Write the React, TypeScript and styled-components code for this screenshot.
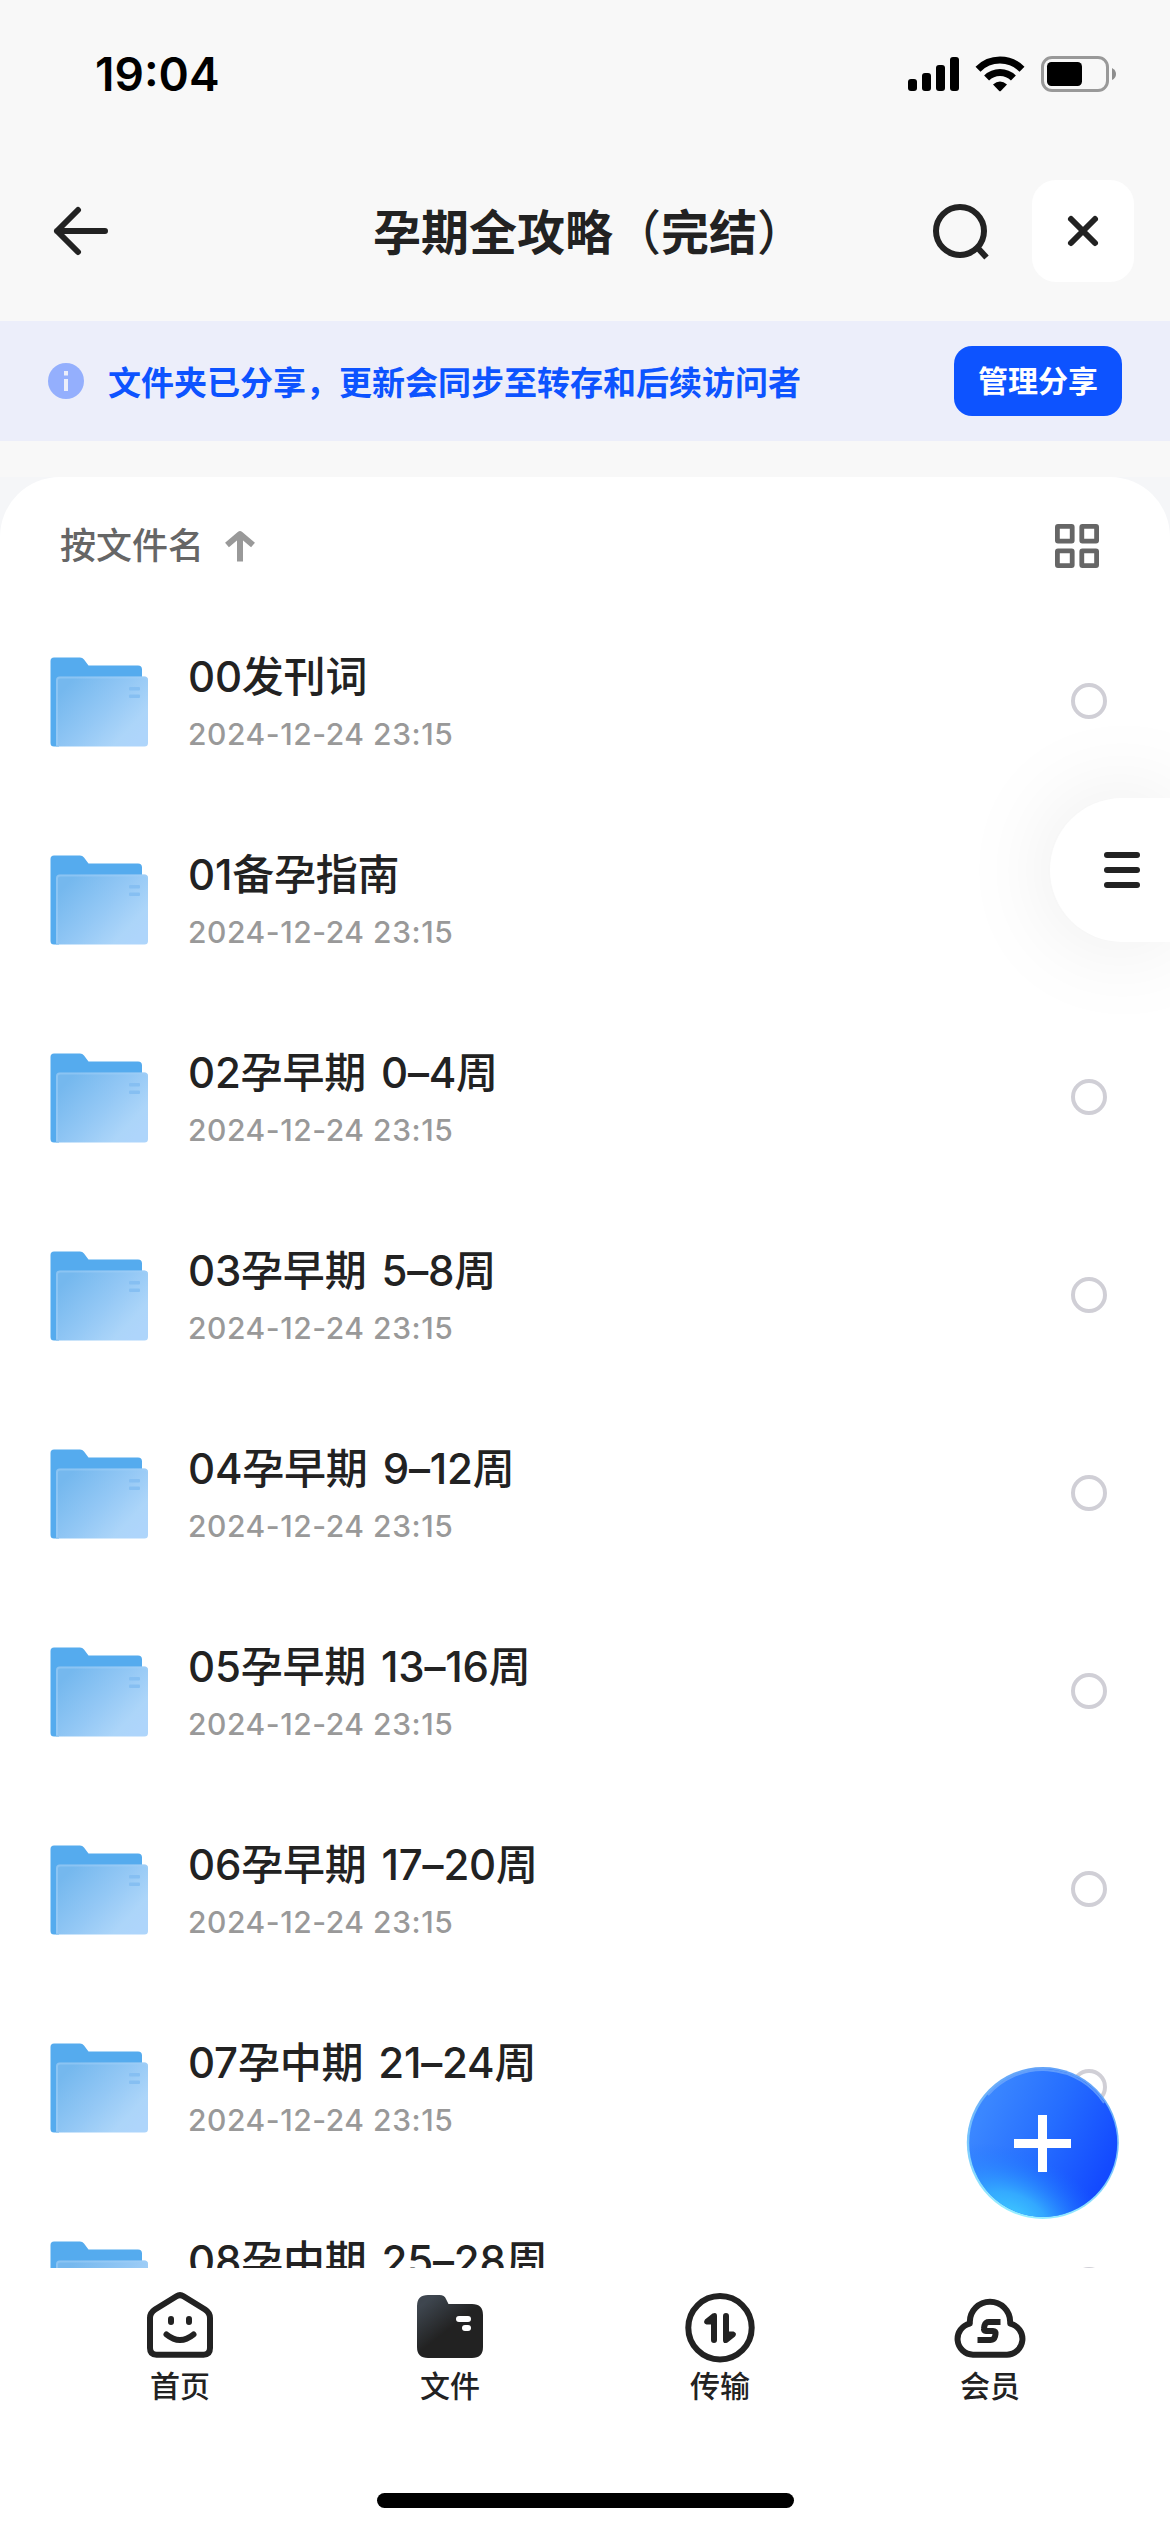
import React from "react";
import styled, { createGlobalStyle } from "styled-components";

const ink = "#222222";

const GlobalStyle = createGlobalStyle`
  * { box-sizing: border-box; }
  body {
    margin: 0;
    background: #ffffff;
    font-family: Inter, "Noto Sans CJK SC", sans-serif;
    color: ${ink};
  }
  button { font: inherit; border: 0; padding: 0; margin: 0; background: none; color: inherit; }
  svg { display: block; flex: none; }
`;

const Screen = styled.div`
  position: relative;
  width: 1170px;
  height: 2532px;
  display: flex;
  flex-direction: column;
  overflow: hidden;
  background: #f8f8f8;
`;

const StatusBar = styled.div`
  height: 141px;
  padding: 7px 54px 0 95px;
  display: flex;
  align-items: center;
  justify-content: space-between;
`;

const Clock = styled.span`
  font-size: 46px;
  font-weight: 600;
  line-height: 60px;
  color: #000;
`;

const StatusIcons = styled.div`
  display: flex;
  align-items: center;
  gap: 16px;
`;

const NavBar = styled.header`
  height: 180px;
  padding: 0 36px 0 48px;
  display: grid;
  grid-template-columns: 325px 1fr auto;
  align-items: center;
`;

const Title = styled.h1`
  margin: 3px 0 0;
  font-size: 48px;
  font-weight: 700;
  line-height: 72px;
  white-space: nowrap;
`;

const Paren = styled.span`
  font-weight: 500;
`;

const NavActions = styled.div`
  display: flex;
  align-items: center;
  gap: 39px;
`;

const IconButton = styled.button`
  display: flex;
  align-items: center;
  justify-content: center;
`;

const BackButton = styled(IconButton)`
  justify-self: start;
`;

const CloseButton = styled(IconButton)`
  width: 102px;
  height: 102px;
  border-radius: 24px;
  background: #ffffff;
`;

const ShareBanner = styled.div`
  height: 120px;
  padding: 0 48px;
  display: flex;
  align-items: center;
  background: #eceefa;
`;

const BannerText = styled.span`
  margin-left: 24px;
  padding-top: 4px;
  flex: 1;
  font-size: 33px;
  font-weight: 700;
  line-height: 48px;
  color: #0d53ff;
`;

const ManageButton = styled.button`
  width: 168px;
  height: 70px;
  border-radius: 18px;
  background: #0d53ff;
  color: #ffffff;
  font-size: 30px;
  font-weight: 700;
  line-height: 44px;
`;

const PanelBackdrop = styled.div`
  margin-top: 36px;
  flex: 1;
  min-height: 0;
  background: #f5f6f8;
`;

const Panel = styled.main`
  height: 100%;
  overflow: hidden;
  border-radius: 60px 60px 0 0;
  background: #ffffff;
`;

const SortBar = styled.div`
  height: 126px;
  padding: 12px 71px 0 60px;
  display: flex;
  align-items: center;
  justify-content: space-between;
`;

const SortButton = styled.button`
  display: flex;
  align-items: center;
  gap: 18px;
  font-size: 36px;
  font-weight: 500;
  line-height: 52px;
  color: #666666;
`;

const FileList = styled.ul`
  margin: 0;
  padding: 0;
  list-style: none;
`;

const FileRow = styled.li`
  height: 198px;
  padding: 0 63px 0 50px;
  display: flex;
  align-items: center;
`;

const FileText = styled.div`
  margin-left: 40px;
  padding-bottom: 3px;
  flex: 1;
  display: flex;
  flex-direction: column;
`;

const FileName = styled.span`
  font-size: 42px;
  font-weight: 450;
  line-height: 60px;
  letter-spacing: -0.2px;
  word-spacing: 4px;
  white-space: nowrap;
`;

const FileDate = styled.span`
  font-size: 30px;
  font-weight: 500;
  line-height: 40px;
  margin-top: 7px;
  letter-spacing: 0.55px;
  color: #999999;
`;

const SelectCircle = styled.span`
  width: 36px;
  height: 36px;
  margin-bottom: 2px;
  border: 4px solid #d0cfd6;
  border-radius: 50%;
`;

const TabBar = styled.nav`
  height: 264px;
  padding: 0 45px;
  display: grid;
  grid-template-columns: repeat(4, 270px);
  grid-template-rows: 225px 15px;
  background: #ffffff;
`;

const Tab = styled.button`
  padding-top: 21px;
  display: flex;
  flex-direction: column;
  align-items: center;
  justify-content: flex-start;
`;

const TabIconBox = styled.span`
  height: 72px;
  display: flex;
  align-items: flex-start;
`;

const TabLabel = styled.span`
  margin-top: 3px;
  font-size: 30px;
  font-weight: 500;
  line-height: 44px;
`;

const HomeIndicator = styled.div`
  grid-column: 1 / -1;
  justify-self: center;
  width: 417px;
  height: 15px;
  border-radius: 8px;
  background: #000;
`;

const SideMenu = styled.button`
  position: absolute;
  top: 798px;
  right: 0;
  width: 120px;
  height: 144px;
  padding-left: 54px;
  display: flex;
  flex-direction: column;
  justify-content: center;
  gap: 9px;
  border-radius: 72px 0 0 72px;
  background: #ffffff;
  box-shadow: 0 0 100px rgba(0, 0, 0, 0.09);
`;

const MenuLine = styled.span`
  width: 36px;
  height: 6px;
  border-radius: 3px;
  background: ${ink};
`;

const AddButton = styled.button`
  position: absolute;
  top: 2066px;
  left: 966px;
  width: 154px;
  height: 154px;
`;

const SignalIcon = () => (
  <svg width="51" height="34" viewBox="0 0 51 34">
    <rect x="0" y="22" width="9" height="12" rx="3" />
    <rect x="14" y="16" width="9" height="18" rx="3" />
    <rect x="28" y="8" width="9" height="26" rx="3" />
    <rect x="42" y="0" width="9" height="34" rx="3" />
  </svg>
);

const WifiIcon = () => (
  <svg width="50" height="36" viewBox="0 0 50 36">
    <g fill="none" stroke="#000" strokeWidth="7">
      <path d="M3 13.2 A31 31 0 0 1 47 13.2" />
      <path d="M11.6 22 A19 19 0 0 1 38.4 22" />
    </g>
    <path d="M18 28.5 Q25 22.5 32 28.5 L26 34.8 Q25 35.8 24 34.8 Z" />
  </svg>
);

const BatteryIcon = () => (
  <svg width="75" height="36" viewBox="0 0 75 36">
    <rect x="1.5" y="1.5" width="65" height="33" rx="9.5" fill="none" stroke="#999" strokeWidth="3" />
    <rect x="6" y="6" width="35" height="24" rx="4.5" />
    <path d="M71 12 Q75 14 75 18 Q75 22 71 24 Z" fill="#8e8e8e" />
  </svg>
);

const BackIcon = () => (
  <svg width="66" height="60" viewBox="0 0 66 60" fill="none" stroke={ink} strokeWidth="6" strokeLinecap="round" strokeLinejoin="round">
    <path d="M9 30 H57 M30 9 L9 30 L30 51" />
  </svg>
);

const SearchIcon = () => (
  <svg width="66" height="66" viewBox="0 0 66 66" fill="none" stroke={ink} strokeWidth="6">
    <circle cx="33" cy="33" r="24" />
    <path d="M49 48 L59.5 59.5" />
  </svg>
);

const CloseIcon = () => (
  <svg width="36" height="36" viewBox="0 0 36 36" fill="none" stroke={ink} strokeWidth="6" strokeLinecap="round">
    <path d="M6 6 L30 30 M30 6 L6 30" />
  </svg>
);

const InfoIcon = () => (
  <svg width="36" height="36" viewBox="0 0 36 36">
    <circle cx="18" cy="18" r="18" fill="#94affd" />
    <path d="M16 8 H20 V12.5 H16 Z M16 16 H20 V28 H16 Z" fill="#eceefa" />
  </svg>
);

const SortArrowIcon = () => (
  <svg width="36" height="36" viewBox="0 0 36 36" fill="none" stroke="#999" strokeWidth="6" strokeLinejoin="round">
    <path d="M18 33.5 V6 M5 17 L18 6 L31 17" />
  </svg>
);

const GridIcon = () => (
  <svg width="44" height="44" viewBox="0 0 44 44" fill="none" stroke="#666" strokeWidth="4.8">
    {[2.4, 26.8].map((y) =>
      [2.4, 26.8].map((x) => <rect key={`${x}-${y}`} x={x} y={y} width="14.8" height="14.8" rx="0.6" />)
    )}
  </svg>
);

const FolderIcon = () => (
  <svg width="98" height="90" viewBox="0 0 98 90">
    <path d="M4 0.5 H30 Q32.5 0.5 34 2.5 L38.5 8.5 H88 Q92 8.5 92 12.5 V60 H9 V89.5 H4 Q0.5 89.5 0.5 86 V4 Q0.5 0.5 4 0.5 Z" fill="#55abee" />
    <path d="M6 89.5 V23 Q6 19.5 9.5 19.5 H94.5 Q98 19.5 98 23 V86 Q98 89.5 94.5 89.5 Z" fill="url(#folderFront)" />
    <path d="M7 88 V23.5 Q7 20.5 10 20.5 H94 Q97 20.5 97 23.5" fill="none" stroke="#a2d0f8" strokeWidth="2" opacity="0.5" />
    <rect x="79" y="30" width="11" height="3.5" rx="1" fill="#86bff2" />
    <rect x="79" y="37.5" width="11" height="3.5" rx="1" fill="#86bff2" />
  </svg>
);

const HomeIcon = () => (
  <svg width="72" height="72" viewBox="0 0 72 72" fill="none" stroke={ink} strokeWidth="6" strokeLinecap="round">
    <path d="M32.5 7.2 Q36 5 39.5 7.2 L61 20.5 Q66 23.8 66 29 V59 Q66 65.7 59.5 65.7 H12.5 Q6 65.7 6 59 V29 Q6 23.8 11 20.5 Z" />
    <path d="M27 30 V33 M45 30 V33" />
    <path d="M22.5 45.5 Q36 56.5 49.5 45.5" />
  </svg>
);

const FilesIcon = () => (
  <svg width="72" height="72" viewBox="0 0 72 72">
    <defs>
      <linearGradient id="filesFill" gradientUnits="userSpaceOnUse" x1="8" y1="16" x2="30" y2="44">
        <stop offset="0" stopColor="#3e464f" />
        <stop offset="1" stopColor={ink} />
      </linearGradient>
    </defs>
    <path d="M14 6 H25.5 Q30.5 6 32 10 L34.5 15 H58 Q69 15 69 26 V58 Q69 69 58 69 H14 Q3 69 3 58 V17 Q3 6 14 6 Z" fill="url(#filesFill)" />
    <rect x="42" y="27" width="15" height="6" rx="3" fill="#fff" />
    <rect x="48" y="36" width="9" height="6" rx="3" fill="#fff" />
  </svg>
);

const TransferIcon = () => (
  <svg width="72" height="76" viewBox="0 0 72 76">
    <circle cx="36" cy="38.7" r="31.7" fill="none" stroke={ink} strokeWidth="6" />
    <g fill={ink}>
      <path id="upMark" d="M27 35.5 H22.5 Q18.5 34 21 30.5 L28.5 24.5 Q33 22.5 33 27 V51 Q33 54 30 54 Q27 54 27 51 Z" />
      <use href="#upMark" transform="rotate(180 36 39)" />
    </g>
  </svg>
);

const MemberIcon = () => (
  <svg width="72" height="72" viewBox="0 0 72 72" fill="none" stroke={ink} strokeWidth="6">
    <path
      d="M19 65.7 H53 A15.75 15.75 0 0 0 56.2 34.6 V33 A20.2 20.2 0 0 0 15.8 33 V34.6 A15.75 15.75 0 0 0 19 65.7 Z"
      strokeLinejoin="round"
    />
    <path d="M46.5 33 H35 Q31.5 33 30.5 36.5 L30 39.5 Q29.5 42 32 42 H39 Q42 42 41.5 45 L41 47.5 Q40 51 36.5 51 H23.5" />
  </svg>
);

const PlusBadge = () => (
  <svg width="154" height="154" viewBox="0 0 154 154">
    <defs>
      <linearGradient id="addBase" x1="0.1" y1="0.25" x2="0.95" y2="0.65">
        <stop offset="0" stopColor="#3b87ff" />
        <stop offset="0.5" stopColor="#256dff" />
        <stop offset="1" stopColor="#134aff" />
      </linearGradient>
      <radialGradient
        id="addGlow"
        gradientUnits="userSpaceOnUse"
        cx="0"
        cy="0"
        r="82"
        gradientTransform="translate(46 152) rotate(24) scale(1.3 0.82)"
      >
        <stop offset="0" stopColor="#40ccff" />
        <stop offset="0.35" stopColor="#36b4ff" stopOpacity="0.85" />
        <stop offset="1" stopColor="#1b6dff" stopOpacity="0" />
      </radialGradient>
      <linearGradient id="addRim" x1="0.6" y1="0" x2="0.4" y2="1">
        <stop offset="0" stopColor="#62a1f8" />
        <stop offset="0.55" stopColor="#78c4fc" />
        <stop offset="1" stopColor="#98f0ff" />
      </linearGradient>
    </defs>
    <circle cx="76.8" cy="77" r="76" fill="url(#addRim)" />
    <circle cx="77.2" cy="77" r="74" fill="url(#addBase)" />
    <circle cx="77.2" cy="77" r="74" fill="url(#addGlow)" />
    <path d="M22 29 A73 73 0 0 1 138 37" fill="none" stroke="#76adfb" strokeWidth="2" opacity="0.7" />
    <path d="M48 77.5 H105 M76.5 49 V106" stroke="#fff" strokeWidth="9" />
  </svg>
);

const SharedDefs = () => (
  <svg width="0" height="0">
    <defs>
      <linearGradient id="folderFront" gradientUnits="userSpaceOnUse" x1="20" y1="25" x2="85" y2="85">
        <stop offset="0" stopColor="#75b8ee" />
        <stop offset="0.5" stopColor="#94c8f5" />
        <stop offset="0.85" stopColor="#acd5f9" />
        <stop offset="1" stopColor="#aed5fb" />
      </linearGradient>
    </defs>
  </svg>
);

const files = [
  "00发刊词",
  "01备孕指南",
  "02孕早期 0–4周",
  "03孕早期 5–8周",
  "04孕早期 9–12周",
  "05孕早期 13–16周",
  "06孕早期 17–20周",
  "07孕中期 21–24周",
  "08孕中期 25–28周",
];

const tabs = [
  { label: "首页", Icon: HomeIcon },
  { label: "文件", Icon: FilesIcon },
  { label: "传输", Icon: TransferIcon },
  { label: "会员", Icon: MemberIcon },
];

export default function App() {
  return (
    <Screen>
      <GlobalStyle />
      <SharedDefs />
      <StatusBar>
        <Clock>19:04</Clock>
        <StatusIcons>
          <SignalIcon />
          <WifiIcon />
          <BatteryIcon />
        </StatusIcons>
      </StatusBar>
      <NavBar>
        <BackButton aria-label="返回">
          <BackIcon />
        </BackButton>
        <Title>
          孕期全攻略<Paren>（</Paren>完结<Paren>）</Paren>
        </Title>
        <NavActions>
          <IconButton aria-label="搜索">
            <SearchIcon />
          </IconButton>
          <CloseButton aria-label="关闭">
            <CloseIcon />
          </CloseButton>
        </NavActions>
      </NavBar>
      <ShareBanner>
        <InfoIcon />
        <BannerText>文件夹已分享，更新会同步至转存和后续访问者</BannerText>
        <ManageButton>管理分享</ManageButton>
      </ShareBanner>
      <PanelBackdrop>
        <Panel>
          <SortBar>
            <SortButton>
              按文件名
              <SortArrowIcon />
            </SortButton>
            <IconButton aria-label="网格视图">
              <GridIcon />
            </IconButton>
          </SortBar>
          <FileList>
            {files.map((name) => (
              <FileRow key={name}>
                <FolderIcon />
                <FileText>
                  <FileName>{name}</FileName>
                  <FileDate>2024-12-24 23:15</FileDate>
                </FileText>
                <SelectCircle />
              </FileRow>
            ))}
          </FileList>
        </Panel>
      </PanelBackdrop>
      <TabBar>
        {tabs.map(({ label, Icon }) => (
          <Tab key={label}>
            <TabIconBox>
              <Icon />
            </TabIconBox>
            <TabLabel>{label}</TabLabel>
          </Tab>
        ))}
        <HomeIndicator />
      </TabBar>
      <SideMenu aria-label="菜单">
        <MenuLine />
        <MenuLine />
        <MenuLine />
      </SideMenu>
      <AddButton aria-label="新建">
        <PlusBadge />
      </AddButton>
    </Screen>
  );
}
